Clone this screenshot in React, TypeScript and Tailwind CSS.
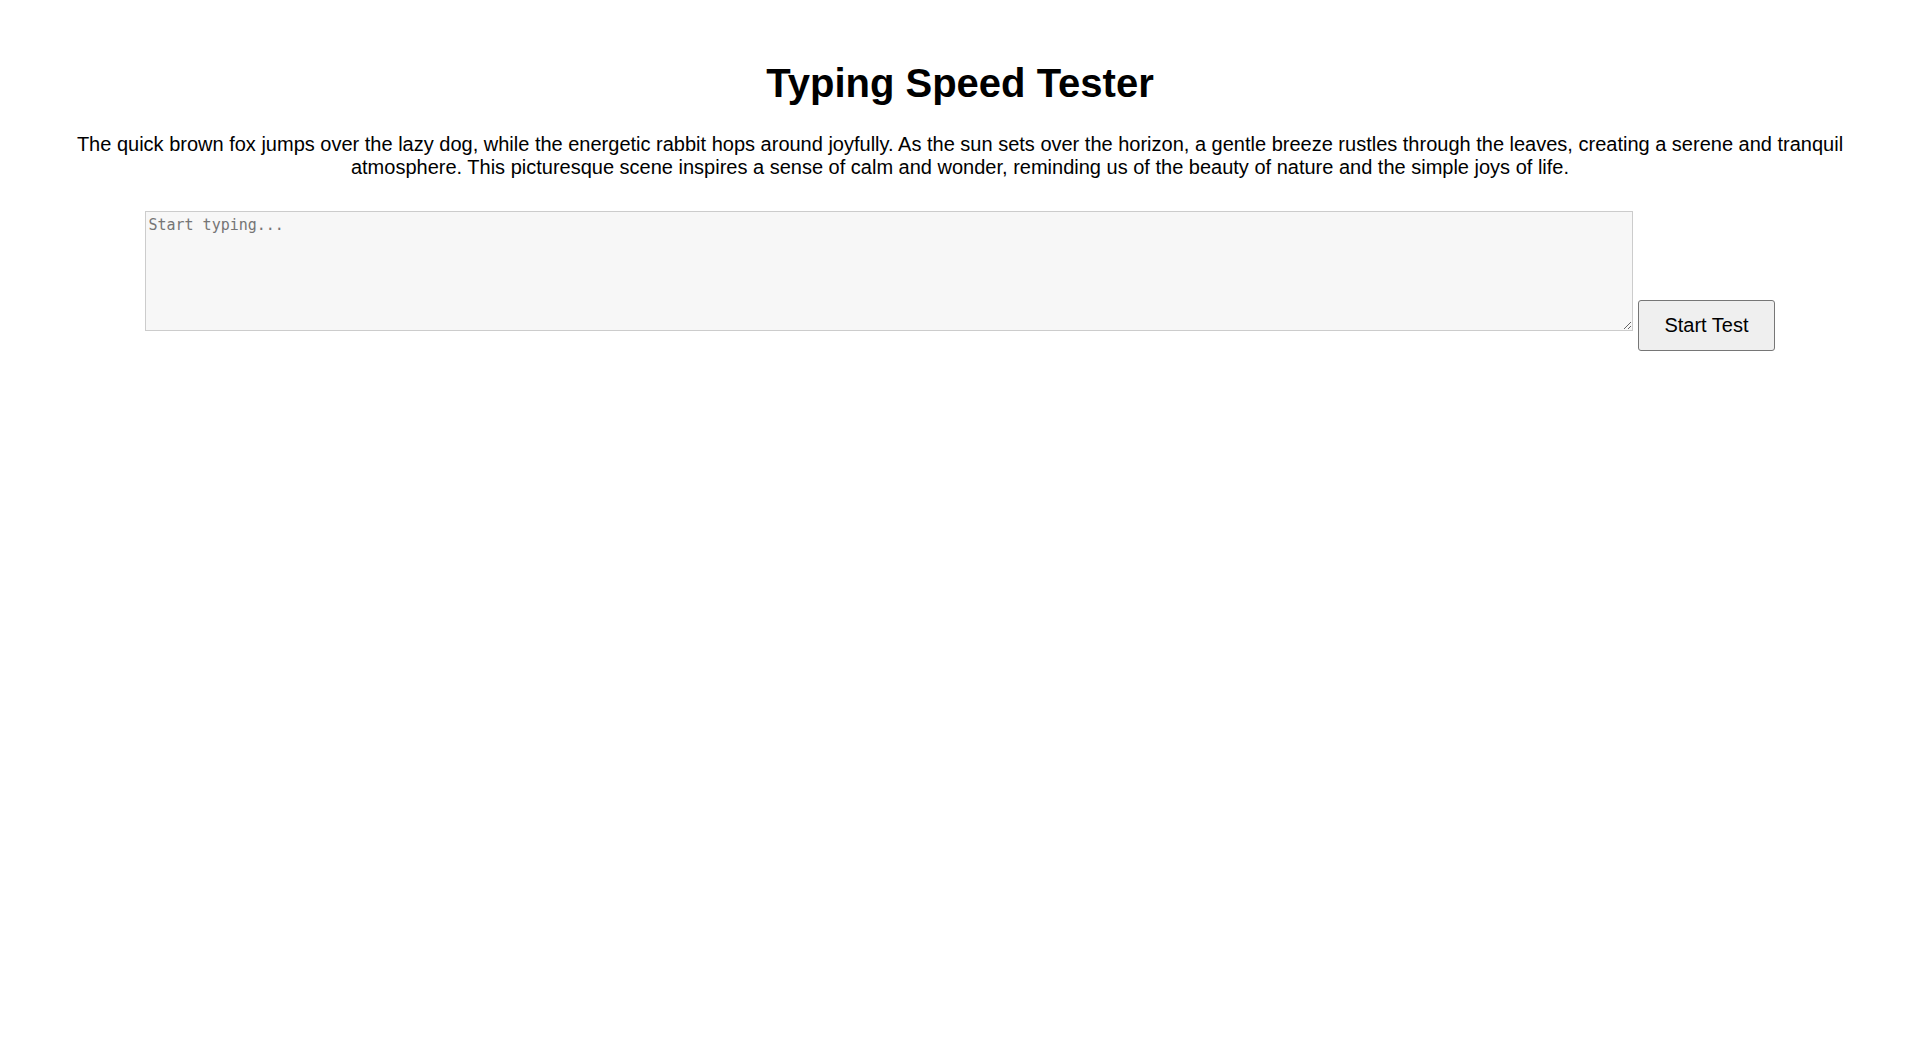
import { useState } from "react";

const passage =
  "The quick brown fox jumps over the lazy dog, while the energetic rabbit hops around joyfully. As the sun sets over the horizon, a gentle breeze rustles through the leaves, creating a serene and tranquil atmosphere. This picturesque scene inspires a sense of calm and wonder, reminding us of the beauty of nature and the simple joys of life.";

export default function App() {
  const [text, setText] = useState("");

  return (
    <div className="min-h-screen bg-white px-5 pt-[60px] text-center font-['Liberation_Sans',Arial,sans-serif] text-black">
      <h1 className="text-[40px] font-bold leading-[46px]">Typing Speed Tester</h1>
      <p className="mt-[27px] text-[20px] leading-[23px]">{passage}</p>

      <div className="mt-[32px] flex justify-center items-start">
        <textarea
          value={text}
          onChange={(e) => setText(e.target.value)}
          placeholder="Start typing..."
          className="w-[1488px] h-[120px] resize border border-[#cccccc] bg-[#f7f7f7] p-[2px] font-['DejaVu_Sans_Mono',monospace] text-[15px] text-left placeholder:text-[#757575]"
        />
        <button className="ml-[5px] mt-[89px] rounded-[3px] border border-[#767676] bg-[#efefef] px-[25px] py-[13px] text-[20px] leading-[23px]">
          Start Test
        </button>
      </div>
    </div>
  );
}
